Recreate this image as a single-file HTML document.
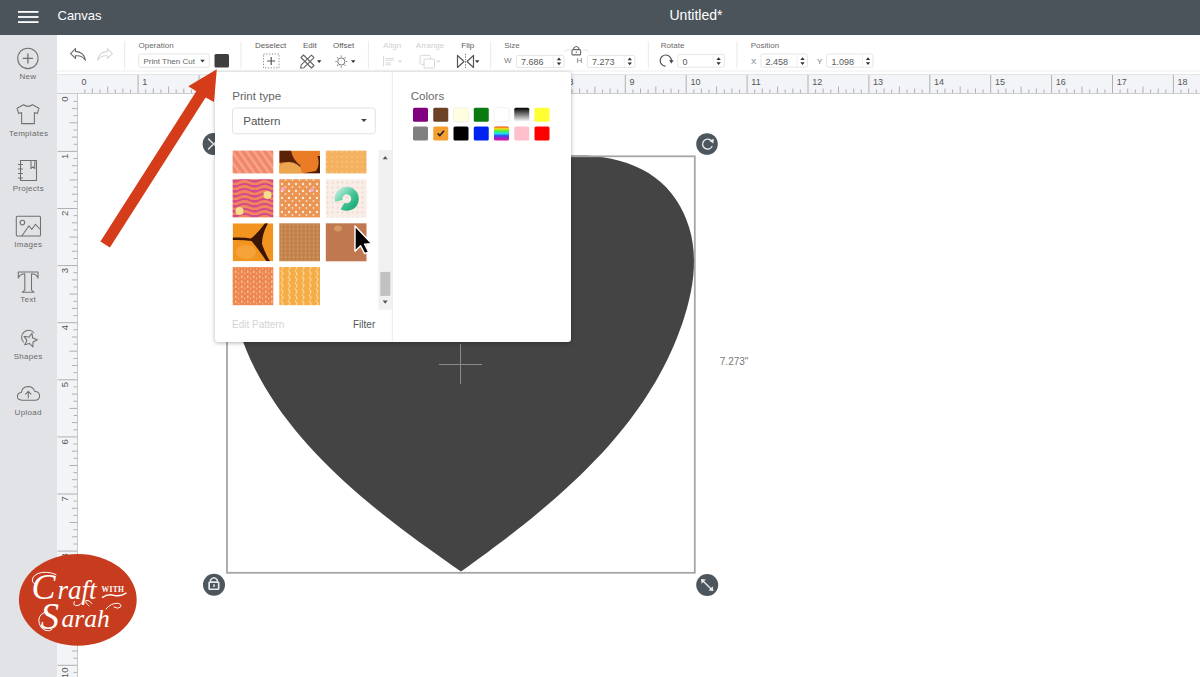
<!DOCTYPE html>
<html><head><meta charset="utf-8">
<style>
*{margin:0;padding:0;box-sizing:border-box}
html,body{width:1200px;height:677px;overflow:hidden;background:#fff;font-family:"Liberation Sans",sans-serif}
.abs{position:absolute;left:0;top:0}
svg{font-family:"Liberation Sans",sans-serif}
#popup{position:absolute;left:215px;top:72px;width:355.5px;height:270px;background:#fff;border-radius:3px;box-shadow:0 1px 4px rgba(0,0,0,0.30)}
</style></head><body>

<!-- base chrome -->
<svg class="abs" width="1200" height="677">
  <rect x="0" y="0" width="1200" height="35" fill="#4c545b"/>
  <rect x="0" y="35" width="57" height="642" fill="#e2e3e7"/>
  <g fill="#fff">
    <rect x="18" y="11" width="20.5" height="1.8"/>
    <rect x="18" y="16.1" width="20.5" height="1.8"/>
    <rect x="18" y="21.2" width="20.5" height="1.8"/>
  </g>
  <text x="57.5" y="20.2" font-size="13" fill="#fff">Canvas</text>
  <text x="669.5" y="20.3" font-size="14" fill="#fff">Untitled*</text>

  <!-- sidebar -->
  <g fill="none" stroke="#707070" stroke-width="1.05" stroke-linejoin="round" stroke-linecap="round">
    <!-- New -->
    <circle cx="27.9" cy="58.4" r="10.2"/>
    <path d="M27.9 53.8 V63 M23.3 58.4 H32.5" stroke-width="1.3"/>
    <!-- Templates: t-shirt -->
    <path d="M23.5 104.8 L17 108.2 L18.6 113.6 L21.6 112.6 L21.6 123.6 L34.4 123.6 L34.4 112.6 L37.4 113.6 L39 108.2 L32.5 104.8 Q28 108 23.5 104.8 Z"/>
    <!-- Projects: notebook -->
    <path d="M20.5 160.5 H36.5 V180.5 H20.5 Z M31 160.5 V168.5 L32.9 166.8 L34.8 168.5 V160.5"/>
    <path d="M18.4 164.5 H22.5 M18.4 169 H22.5 M18.4 173.5 H22.5 M18.4 178 H22.5"/>
    <!-- Images -->
    <rect x="16.3" y="216.3" width="24.2" height="19.6" rx="1"/>
    <circle cx="22.4" cy="222.6" r="2.3"/>
    <path d="M22 235.8 L29 225.8 L31.8 229.5 L35.4 224.3 L40.4 229.5"/>
    <!-- Text: T -->
    <path d="M18.3 272 H38 V278 L36.5 275.5 Q35 273.8 31.5 273.8 V290.2 L34 292.2 H22.3 L24.8 290.2 V273.8 Q21.3 273.8 19.8 275.5 L18.3 278 Z"/>
    <!-- Shapes -->
    <path d="M23.5 342 A6.8 6.8 0 1 1 33.8 332.5"/>
    <path d="M32.0 333.2 L32.7 338.1 L37.4 339.7 L33.0 342.0 L32.9 346.9 L29.4 343.4 L24.7 344.8 L26.9 340.4 L24.1 336.4 L29.0 337.1 Z"/>
    <!-- Upload: cloud -->
    <path d="M22 400.2 Q17.3 400 17.4 396.3 Q17.6 392.5 21.4 392.4 Q22 386.7 28 386.4 Q33.2 386.5 34.6 391.2 Q39.7 391.8 39.6 396 Q39.4 400.2 35 400.2 Z"/>
    <path d="M28.3 397.8 V391.5 M25.6 394.2 L28.3 391.3 L31 394.2"/>
  </g>
  <g fill="#6a6a6a" font-size="8" text-anchor="middle" letter-spacing="0.3">
    <text x="28" y="79.2">New</text>
    <text x="28.7" y="135.7">Templates</text>
    <text x="28.3" y="191.3">Projects</text>
    <text x="28.3" y="246.5">Images</text>
    <text x="28.2" y="302.4">Text</text>
    <text x="28.2" y="358.6">Shapes</text>
    <text x="28.2" y="414.5">Upload</text>
  </g>


  <!-- toolbar -->
  <line x1="57" y1="71" x2="1200" y2="71" stroke="#eeeff1" stroke-width="1"/>
  <!-- undo / redo -->
  <path d="M75.5 48.6 L70.6 53.6 L75.5 58.4 L75.5 55.8 Q82 55 85.5 60.2 Q84 52 75.5 51.4 Z" fill="none" stroke="#666" stroke-width="1.1" stroke-linejoin="round"/>
  <path d="M107.5 48.6 L112.4 53.6 L107.5 58.4 L107.5 55.8 Q101 55 97.5 60.2 Q99 52 107.5 51.4 Z" fill="none" stroke="#d6d6d6" stroke-width="1.1" stroke-linejoin="round"/>
  <!-- separators -->
  <g stroke="#e9e9ea" stroke-width="1">
    <line x1="124.7" y1="41.3" x2="124.7" y2="68.7"/>
    <line x1="241" y1="41.3" x2="241" y2="68.7"/>
    <line x1="368.4" y1="41.3" x2="368.4" y2="68.7"/>
    <line x1="490.7" y1="41.3" x2="490.7" y2="68.7"/>
    <line x1="648.3" y1="41.3" x2="648.3" y2="68.7"/>
    <line x1="736.9" y1="41.3" x2="736.9" y2="68.7"/>
  </g>
  <!-- labels -->
  <g font-size="8" fill="#6a6a6a">
    <text x="138.5" y="48">Operation</text>
    <text x="255" y="48" fill="#5a5a5a">Deselect</text>
    <text x="303" y="48" fill="#5a5a5a">Edit</text>
    <text x="333" y="48" fill="#5a5a5a">Offset</text>
    <text x="383.3" y="48" fill="#d0d0d0">Align</text>
    <text x="415.8" y="48" fill="#d0d0d0">Arrange</text>
    <text x="461.3" y="48" fill="#5a5a5a">Flip</text>
    <text x="504.2" y="48.2">Size</text>
    <text x="660.8" y="48.2">Rotate</text>
    <text x="750.7" y="48">Position</text>
  </g>
  <!-- operation dropdown -->
  <rect x="138.7" y="54" width="70.5" height="13.3" rx="1.5" fill="#fff" stroke="#e4e4e4" stroke-width="1"/>
  <text x="143.5" y="64" font-size="8" fill="#666">Print Then Cut</text>
  <path d="M200.3 59.8 H204.7 L202.5 62.6 Z" fill="#333"/>
  <rect x="214.5" y="54" width="14.5" height="13.5" rx="1.5" fill="#3e3e3e"/>
  <!-- deselect icon -->
  <rect x="263.5" y="54" width="15.5" height="13.8" fill="none" stroke="#888" stroke-width="1" stroke-dasharray="1.2 1.6"/>
  <path d="M271.2 57 V65 M267.2 61 H275.2" stroke="#555" stroke-width="1.2"/>
  <!-- edit icon: crossed pencil / ruler -->
  <g fill="none" stroke="#666" stroke-width="1.1" stroke-linejoin="round">
    <path d="M301 57.5 L303.5 55 L314 65.5 L311.5 68 Z"/>
    <path d="M311.5 55.2 L314 57.7 L304 67.7 L300.6 68.2 L301.2 64.9 Z"/>
  </g>
  <path d="M317 60.2 H321.4 L319.2 63 Z" fill="#333"/>
  <!-- offset icon: sun -->
  <g fill="none" stroke="#777" stroke-width="1">
    <circle cx="341.3" cy="61.5" r="3.6"/>
    <path d="M341.3 55.6 V56.8 M341.3 66.2 V67.4 M335.4 61.5 H336.6 M346 61.5 H347.2 M337.1 57.3 L338 58.2 M344.6 64.8 L345.5 65.7 M337.1 65.7 L338 64.8 M344.6 58.2 L345.5 57.3" stroke-width="1.1"/>
  </g>
  <path d="M351 60.2 H355.4 L353.2 63 Z" fill="#333"/>
  <!-- align icon (disabled) -->
  <g stroke="#dadada" stroke-width="1" fill="none">
    <path d="M383.5 56 V66.5"/>
    <path d="M385.5 58.5 H394 M385.5 60.3 H394 M385.5 63 H391 M385.5 64.8 H391"/>
  </g>
  <path d="M398 60.5 H402 L400 63 Z" fill="#d8d8d8"/>
  <!-- arrange icon (disabled) -->
  <g stroke="#d8d8d8" stroke-width="1" fill="#fff">
    <rect x="420" y="55.3" width="10.5" height="9" rx="1.5"/>
    <rect x="424" y="59" width="10.5" height="9" rx="1"/>
  </g>
  <path d="M436.3 60.5 H440.3 L438.3 63 Z" fill="#d8d8d8"/>
  <!-- flip icon -->
  <g fill="none" stroke="#555" stroke-width="1.2" stroke-linejoin="round">
    <path d="M457.5 55.5 V67.5 L464 61.5 Z"/>
    <path d="M473.5 55.5 V67.5 L467 61.5 Z"/>
  </g>
  <path d="M465.5 53.8 V68" stroke="#777" stroke-width="1" stroke-dasharray="1.3 1.3"/>
  <path d="M475 60.2 H479.4 L477.2 63 Z" fill="#333"/>

  <!-- size -->
  <g font-size="8" fill="#777">
    <text x="504" y="63">W</text>
    <text x="576.5" y="63">H</text>
    <text x="751" y="64">X</text>
    <text x="817" y="64">Y</text>
  </g>
  <!-- lock + bracket -->
  <path d="M565 52 Q565 50 567 50 H570.5 M582.5 50 H586 Q588 50 588 52" fill="none" stroke="#e4e4e4" stroke-width="1"/>
  <rect x="572" y="49.6" width="8.6" height="5.3" rx="1" fill="none" stroke="#666" stroke-width="1.1"/>
  <path d="M573.8 49.6 V48.2 Q576.3 44.8 578.8 48.2 V49.6" fill="none" stroke="#666" stroke-width="1.1"/>
  <circle cx="576.3" cy="52.2" r="0.7" fill="#666"/>

  <!-- inputs -->
  <g fill="#fff" stroke="#e6e6e6" stroke-width="1">
    <rect x="516.5" y="55.5" width="47.5" height="12" rx="1.5"/>
    <rect x="587.3" y="55.5" width="47.5" height="12" rx="1.5"/>
    <rect x="677.8" y="54.5" width="46.5" height="12.8" rx="1.5"/>
    <rect x="761" y="54" width="46.4" height="13.2" rx="1.5"/>
    <rect x="826.5" y="54" width="46.5" height="13.2" rx="1.5"/>
  </g>
  <g stroke="#efefef" stroke-width="1">
    <line x1="553.5" y1="56" x2="553.5" y2="67"/>
    <line x1="624.3" y1="56" x2="624.3" y2="67"/>
    <line x1="713.3" y1="55" x2="713.3" y2="67"/>
    <line x1="797" y1="54.5" x2="797" y2="67"/>
    <line x1="862.5" y1="54.5" x2="862.5" y2="67"/>
  </g>
  <g fill="#333">
    <path d="M556.8 60.3 L559 57.5 L561.2 60.3 Z M556.8 62.5 L559 65.3 L561.2 62.5 Z"/>
    <path d="M627.6 60.3 L629.8 57.5 L632 60.3 Z M627.6 62.5 L629.8 65.3 L632 62.5 Z"/>
    <path d="M716.4 60 L718.6 57.2 L720.8 60 Z M716.4 62.2 L718.6 65 L720.8 62.2 Z"/>
    <path d="M800.3 60 L802.5 57.2 L804.7 60 Z M800.3 62.2 L802.5 65 L804.7 62.2 Z"/>
    <path d="M865.8 60 L868 57.2 L870.2 60 Z M865.8 62.2 L868 65 L870.2 62.2 Z"/>
  </g>
  <g font-size="9" fill="#585858">
    <text x="521" y="64.8">7.686</text>
    <text x="592" y="64.8">7.273</text>
    <text x="682.5" y="64.8">0</text>
    <text x="765.4" y="64.6">2.458</text>
    <text x="831.6" y="64.6">1.098</text>
  </g>
  <!-- rotate icon -->
  <path d="M665.6 66.2 A5.6 5.6 0 1 1 671.4 60.8" fill="none" stroke="#555" stroke-width="1.2"/>
  <path d="M669.2 60 L673.6 60.2 L671.4 63.4 Z" fill="#444"/>


  <!-- rulers -->
  <rect x="57" y="74.5" width="1143" height="19.5" fill="#f3f4f7"/>
  <rect x="57" y="94" width="20.5" height="583" fill="#f3f4f7"/>
  <line x1="57" y1="74.5" x2="1200" y2="74.5" stroke="#e4e5e8" stroke-width="1"/>
  <g stroke="#b0b0b0" stroke-width="1">
<line x1="84.8" y1="89.5" x2="84.8" y2="93.5"/>
<line x1="92.4" y1="88.5" x2="92.4" y2="93.5"/>
<line x1="100.0" y1="89.5" x2="100.0" y2="93.5"/>
<line x1="107.7" y1="86.5" x2="107.7" y2="93.5"/>
<line x1="115.3" y1="89.5" x2="115.3" y2="93.5"/>
<line x1="122.9" y1="88.5" x2="122.9" y2="93.5"/>
<line x1="130.5" y1="89.5" x2="130.5" y2="93.5"/>
<line x1="138.1" y1="75.0" x2="138.1" y2="93.5"/>
<line x1="145.7" y1="89.5" x2="145.7" y2="93.5"/>
<line x1="153.3" y1="88.5" x2="153.3" y2="93.5"/>
<line x1="160.9" y1="89.5" x2="160.9" y2="93.5"/>
<line x1="168.6" y1="86.5" x2="168.6" y2="93.5"/>
<line x1="176.2" y1="89.5" x2="176.2" y2="93.5"/>
<line x1="183.8" y1="88.5" x2="183.8" y2="93.5"/>
<line x1="191.4" y1="89.5" x2="191.4" y2="93.5"/>
<line x1="199.0" y1="75.0" x2="199.0" y2="93.5"/>
<line x1="206.6" y1="89.5" x2="206.6" y2="93.5"/>
<line x1="214.2" y1="88.5" x2="214.2" y2="93.5"/>
<line x1="221.8" y1="89.5" x2="221.8" y2="93.5"/>
<line x1="229.4" y1="86.5" x2="229.4" y2="93.5"/>
<line x1="237.1" y1="89.5" x2="237.1" y2="93.5"/>
<line x1="244.7" y1="88.5" x2="244.7" y2="93.5"/>
<line x1="252.3" y1="89.5" x2="252.3" y2="93.5"/>
<line x1="259.9" y1="75.0" x2="259.9" y2="93.5"/>
<line x1="267.5" y1="89.5" x2="267.5" y2="93.5"/>
<line x1="275.1" y1="88.5" x2="275.1" y2="93.5"/>
<line x1="282.7" y1="89.5" x2="282.7" y2="93.5"/>
<line x1="290.4" y1="86.5" x2="290.4" y2="93.5"/>
<line x1="298.0" y1="89.5" x2="298.0" y2="93.5"/>
<line x1="305.6" y1="88.5" x2="305.6" y2="93.5"/>
<line x1="313.2" y1="89.5" x2="313.2" y2="93.5"/>
<line x1="320.8" y1="75.0" x2="320.8" y2="93.5"/>
<line x1="328.4" y1="89.5" x2="328.4" y2="93.5"/>
<line x1="336.0" y1="88.5" x2="336.0" y2="93.5"/>
<line x1="343.6" y1="89.5" x2="343.6" y2="93.5"/>
<line x1="351.2" y1="86.5" x2="351.2" y2="93.5"/>
<line x1="358.9" y1="89.5" x2="358.9" y2="93.5"/>
<line x1="366.5" y1="88.5" x2="366.5" y2="93.5"/>
<line x1="374.1" y1="89.5" x2="374.1" y2="93.5"/>
<line x1="381.7" y1="75.0" x2="381.7" y2="93.5"/>
<line x1="389.3" y1="89.5" x2="389.3" y2="93.5"/>
<line x1="396.9" y1="88.5" x2="396.9" y2="93.5"/>
<line x1="404.5" y1="89.5" x2="404.5" y2="93.5"/>
<line x1="412.1" y1="86.5" x2="412.1" y2="93.5"/>
<line x1="419.8" y1="89.5" x2="419.8" y2="93.5"/>
<line x1="427.4" y1="88.5" x2="427.4" y2="93.5"/>
<line x1="435.0" y1="89.5" x2="435.0" y2="93.5"/>
<line x1="442.6" y1="75.0" x2="442.6" y2="93.5"/>
<line x1="450.2" y1="89.5" x2="450.2" y2="93.5"/>
<line x1="457.8" y1="88.5" x2="457.8" y2="93.5"/>
<line x1="465.4" y1="89.5" x2="465.4" y2="93.5"/>
<line x1="473.0" y1="86.5" x2="473.0" y2="93.5"/>
<line x1="480.7" y1="89.5" x2="480.7" y2="93.5"/>
<line x1="488.3" y1="88.5" x2="488.3" y2="93.5"/>
<line x1="495.9" y1="89.5" x2="495.9" y2="93.5"/>
<line x1="503.5" y1="75.0" x2="503.5" y2="93.5"/>
<line x1="511.1" y1="89.5" x2="511.1" y2="93.5"/>
<line x1="518.7" y1="88.5" x2="518.7" y2="93.5"/>
<line x1="526.3" y1="89.5" x2="526.3" y2="93.5"/>
<line x1="534.0" y1="86.5" x2="534.0" y2="93.5"/>
<line x1="541.6" y1="89.5" x2="541.6" y2="93.5"/>
<line x1="549.2" y1="88.5" x2="549.2" y2="93.5"/>
<line x1="556.8" y1="89.5" x2="556.8" y2="93.5"/>
<line x1="564.4" y1="75.0" x2="564.4" y2="93.5"/>
<line x1="572.0" y1="89.5" x2="572.0" y2="93.5"/>
<line x1="579.6" y1="88.5" x2="579.6" y2="93.5"/>
<line x1="587.2" y1="89.5" x2="587.2" y2="93.5"/>
<line x1="594.9" y1="86.5" x2="594.9" y2="93.5"/>
<line x1="602.5" y1="89.5" x2="602.5" y2="93.5"/>
<line x1="610.1" y1="88.5" x2="610.1" y2="93.5"/>
<line x1="617.7" y1="89.5" x2="617.7" y2="93.5"/>
<line x1="625.3" y1="75.0" x2="625.3" y2="93.5"/>
<line x1="632.9" y1="89.5" x2="632.9" y2="93.5"/>
<line x1="640.5" y1="88.5" x2="640.5" y2="93.5"/>
<line x1="648.1" y1="89.5" x2="648.1" y2="93.5"/>
<line x1="655.8" y1="86.5" x2="655.8" y2="93.5"/>
<line x1="663.4" y1="89.5" x2="663.4" y2="93.5"/>
<line x1="671.0" y1="88.5" x2="671.0" y2="93.5"/>
<line x1="678.6" y1="89.5" x2="678.6" y2="93.5"/>
<line x1="686.2" y1="75.0" x2="686.2" y2="93.5"/>
<line x1="693.8" y1="89.5" x2="693.8" y2="93.5"/>
<line x1="701.4" y1="88.5" x2="701.4" y2="93.5"/>
<line x1="709.0" y1="89.5" x2="709.0" y2="93.5"/>
<line x1="716.6" y1="86.5" x2="716.6" y2="93.5"/>
<line x1="724.3" y1="89.5" x2="724.3" y2="93.5"/>
<line x1="731.9" y1="88.5" x2="731.9" y2="93.5"/>
<line x1="739.5" y1="89.5" x2="739.5" y2="93.5"/>
<line x1="747.1" y1="75.0" x2="747.1" y2="93.5"/>
<line x1="754.7" y1="89.5" x2="754.7" y2="93.5"/>
<line x1="762.3" y1="88.5" x2="762.3" y2="93.5"/>
<line x1="769.9" y1="89.5" x2="769.9" y2="93.5"/>
<line x1="777.6" y1="86.5" x2="777.6" y2="93.5"/>
<line x1="785.2" y1="89.5" x2="785.2" y2="93.5"/>
<line x1="792.8" y1="88.5" x2="792.8" y2="93.5"/>
<line x1="800.4" y1="89.5" x2="800.4" y2="93.5"/>
<line x1="808.0" y1="75.0" x2="808.0" y2="93.5"/>
<line x1="815.6" y1="89.5" x2="815.6" y2="93.5"/>
<line x1="823.2" y1="88.5" x2="823.2" y2="93.5"/>
<line x1="830.8" y1="89.5" x2="830.8" y2="93.5"/>
<line x1="838.5" y1="86.5" x2="838.5" y2="93.5"/>
<line x1="846.1" y1="89.5" x2="846.1" y2="93.5"/>
<line x1="853.7" y1="88.5" x2="853.7" y2="93.5"/>
<line x1="861.3" y1="89.5" x2="861.3" y2="93.5"/>
<line x1="868.9" y1="75.0" x2="868.9" y2="93.5"/>
<line x1="876.5" y1="89.5" x2="876.5" y2="93.5"/>
<line x1="884.1" y1="88.5" x2="884.1" y2="93.5"/>
<line x1="891.7" y1="89.5" x2="891.7" y2="93.5"/>
<line x1="899.4" y1="86.5" x2="899.4" y2="93.5"/>
<line x1="907.0" y1="89.5" x2="907.0" y2="93.5"/>
<line x1="914.6" y1="88.5" x2="914.6" y2="93.5"/>
<line x1="922.2" y1="89.5" x2="922.2" y2="93.5"/>
<line x1="929.8" y1="75.0" x2="929.8" y2="93.5"/>
<line x1="937.4" y1="89.5" x2="937.4" y2="93.5"/>
<line x1="945.0" y1="88.5" x2="945.0" y2="93.5"/>
<line x1="952.6" y1="89.5" x2="952.6" y2="93.5"/>
<line x1="960.2" y1="86.5" x2="960.2" y2="93.5"/>
<line x1="967.9" y1="89.5" x2="967.9" y2="93.5"/>
<line x1="975.5" y1="88.5" x2="975.5" y2="93.5"/>
<line x1="983.1" y1="89.5" x2="983.1" y2="93.5"/>
<line x1="990.7" y1="75.0" x2="990.7" y2="93.5"/>
<line x1="998.3" y1="89.5" x2="998.3" y2="93.5"/>
<line x1="1005.9" y1="88.5" x2="1005.9" y2="93.5"/>
<line x1="1013.5" y1="89.5" x2="1013.5" y2="93.5"/>
<line x1="1021.1" y1="86.5" x2="1021.1" y2="93.5"/>
<line x1="1028.8" y1="89.5" x2="1028.8" y2="93.5"/>
<line x1="1036.4" y1="88.5" x2="1036.4" y2="93.5"/>
<line x1="1044.0" y1="89.5" x2="1044.0" y2="93.5"/>
<line x1="1051.6" y1="75.0" x2="1051.6" y2="93.5"/>
<line x1="1059.2" y1="89.5" x2="1059.2" y2="93.5"/>
<line x1="1066.8" y1="88.5" x2="1066.8" y2="93.5"/>
<line x1="1074.4" y1="89.5" x2="1074.4" y2="93.5"/>
<line x1="1082.0" y1="86.5" x2="1082.0" y2="93.5"/>
<line x1="1089.7" y1="89.5" x2="1089.7" y2="93.5"/>
<line x1="1097.3" y1="88.5" x2="1097.3" y2="93.5"/>
<line x1="1104.9" y1="89.5" x2="1104.9" y2="93.5"/>
<line x1="1112.5" y1="75.0" x2="1112.5" y2="93.5"/>
<line x1="1120.1" y1="89.5" x2="1120.1" y2="93.5"/>
<line x1="1127.7" y1="88.5" x2="1127.7" y2="93.5"/>
<line x1="1135.3" y1="89.5" x2="1135.3" y2="93.5"/>
<line x1="1143.0" y1="86.5" x2="1143.0" y2="93.5"/>
<line x1="1150.6" y1="89.5" x2="1150.6" y2="93.5"/>
<line x1="1158.2" y1="88.5" x2="1158.2" y2="93.5"/>
<line x1="1165.8" y1="89.5" x2="1165.8" y2="93.5"/>
<line x1="1173.4" y1="75.0" x2="1173.4" y2="93.5"/>
<line x1="1181.0" y1="89.5" x2="1181.0" y2="93.5"/>
<line x1="1188.6" y1="88.5" x2="1188.6" y2="93.5"/>
<line x1="1196.2" y1="89.5" x2="1196.2" y2="93.5"/>
<line x1="73.5" y1="101.4" x2="77.5" y2="101.4"/>
<line x1="72.0" y1="108.6" x2="77.5" y2="108.6"/>
<line x1="73.5" y1="115.7" x2="77.5" y2="115.7"/>
<line x1="69.5" y1="122.8" x2="77.5" y2="122.8"/>
<line x1="73.5" y1="130.0" x2="77.5" y2="130.0"/>
<line x1="72.0" y1="137.1" x2="77.5" y2="137.1"/>
<line x1="73.5" y1="144.3" x2="77.5" y2="144.3"/>
<line x1="57.5" y1="151.4" x2="77.5" y2="151.4"/>
<line x1="73.5" y1="158.5" x2="77.5" y2="158.5"/>
<line x1="72.0" y1="165.7" x2="77.5" y2="165.7"/>
<line x1="73.5" y1="172.8" x2="77.5" y2="172.8"/>
<line x1="69.5" y1="179.9" x2="77.5" y2="179.9"/>
<line x1="73.5" y1="187.1" x2="77.5" y2="187.1"/>
<line x1="72.0" y1="194.2" x2="77.5" y2="194.2"/>
<line x1="73.5" y1="201.4" x2="77.5" y2="201.4"/>
<line x1="57.5" y1="208.5" x2="77.5" y2="208.5"/>
<line x1="73.5" y1="215.6" x2="77.5" y2="215.6"/>
<line x1="72.0" y1="222.8" x2="77.5" y2="222.8"/>
<line x1="73.5" y1="229.9" x2="77.5" y2="229.9"/>
<line x1="69.5" y1="237.1" x2="77.5" y2="237.1"/>
<line x1="73.5" y1="244.2" x2="77.5" y2="244.2"/>
<line x1="72.0" y1="251.3" x2="77.5" y2="251.3"/>
<line x1="73.5" y1="258.5" x2="77.5" y2="258.5"/>
<line x1="57.5" y1="265.6" x2="77.5" y2="265.6"/>
<line x1="73.5" y1="272.7" x2="77.5" y2="272.7"/>
<line x1="72.0" y1="279.9" x2="77.5" y2="279.9"/>
<line x1="73.5" y1="287.0" x2="77.5" y2="287.0"/>
<line x1="69.5" y1="294.1" x2="77.5" y2="294.1"/>
<line x1="73.5" y1="301.3" x2="77.5" y2="301.3"/>
<line x1="72.0" y1="308.4" x2="77.5" y2="308.4"/>
<line x1="73.5" y1="315.6" x2="77.5" y2="315.6"/>
<line x1="57.5" y1="322.7" x2="77.5" y2="322.7"/>
<line x1="73.5" y1="329.8" x2="77.5" y2="329.8"/>
<line x1="72.0" y1="337.0" x2="77.5" y2="337.0"/>
<line x1="73.5" y1="344.1" x2="77.5" y2="344.1"/>
<line x1="69.5" y1="351.2" x2="77.5" y2="351.2"/>
<line x1="73.5" y1="358.4" x2="77.5" y2="358.4"/>
<line x1="72.0" y1="365.5" x2="77.5" y2="365.5"/>
<line x1="73.5" y1="372.7" x2="77.5" y2="372.7"/>
<line x1="57.5" y1="379.8" x2="77.5" y2="379.8"/>
<line x1="73.5" y1="386.9" x2="77.5" y2="386.9"/>
<line x1="72.0" y1="394.1" x2="77.5" y2="394.1"/>
<line x1="73.5" y1="401.2" x2="77.5" y2="401.2"/>
<line x1="69.5" y1="408.4" x2="77.5" y2="408.4"/>
<line x1="73.5" y1="415.5" x2="77.5" y2="415.5"/>
<line x1="72.0" y1="422.6" x2="77.5" y2="422.6"/>
<line x1="73.5" y1="429.8" x2="77.5" y2="429.8"/>
<line x1="57.5" y1="436.9" x2="77.5" y2="436.9"/>
<line x1="73.5" y1="444.0" x2="77.5" y2="444.0"/>
<line x1="72.0" y1="451.2" x2="77.5" y2="451.2"/>
<line x1="73.5" y1="458.3" x2="77.5" y2="458.3"/>
<line x1="69.5" y1="465.5" x2="77.5" y2="465.5"/>
<line x1="73.5" y1="472.6" x2="77.5" y2="472.6"/>
<line x1="72.0" y1="479.7" x2="77.5" y2="479.7"/>
<line x1="73.5" y1="486.9" x2="77.5" y2="486.9"/>
<line x1="57.5" y1="494.0" x2="77.5" y2="494.0"/>
<line x1="73.5" y1="501.1" x2="77.5" y2="501.1"/>
<line x1="72.0" y1="508.3" x2="77.5" y2="508.3"/>
<line x1="73.5" y1="515.4" x2="77.5" y2="515.4"/>
<line x1="69.5" y1="522.5" x2="77.5" y2="522.5"/>
<line x1="73.5" y1="529.7" x2="77.5" y2="529.7"/>
<line x1="72.0" y1="536.8" x2="77.5" y2="536.8"/>
<line x1="73.5" y1="544.0" x2="77.5" y2="544.0"/>
<line x1="57.5" y1="551.1" x2="77.5" y2="551.1"/>
<line x1="73.5" y1="558.2" x2="77.5" y2="558.2"/>
<line x1="72.0" y1="565.4" x2="77.5" y2="565.4"/>
<line x1="73.5" y1="572.5" x2="77.5" y2="572.5"/>
<line x1="69.5" y1="579.6" x2="77.5" y2="579.6"/>
<line x1="73.5" y1="586.8" x2="77.5" y2="586.8"/>
<line x1="72.0" y1="593.9" x2="77.5" y2="593.9"/>
<line x1="73.5" y1="601.1" x2="77.5" y2="601.1"/>
<line x1="57.5" y1="608.2" x2="77.5" y2="608.2"/>
<line x1="73.5" y1="615.3" x2="77.5" y2="615.3"/>
<line x1="72.0" y1="622.5" x2="77.5" y2="622.5"/>
<line x1="73.5" y1="629.6" x2="77.5" y2="629.6"/>
<line x1="69.5" y1="636.8" x2="77.5" y2="636.8"/>
<line x1="73.5" y1="643.9" x2="77.5" y2="643.9"/>
<line x1="72.0" y1="651.0" x2="77.5" y2="651.0"/>
<line x1="73.5" y1="658.2" x2="77.5" y2="658.2"/>
<line x1="57.5" y1="665.3" x2="77.5" y2="665.3"/>
<line x1="73.5" y1="672.4" x2="77.5" y2="672.4"/>
  </g>
  <g fill="#555" font-size="9">
<text x="81.4" y="85.2">0</text>
<text x="142.3" y="85.2">1</text>
<text x="203.2" y="85.2">2</text>
<text x="264.1" y="85.2">3</text>
<text x="325.0" y="85.2">4</text>
<text x="385.9" y="85.2">5</text>
<text x="446.8" y="85.2">6</text>
<text x="507.7" y="85.2">7</text>
<text x="568.6" y="85.2">8</text>
<text x="629.5" y="85.2">9</text>
<text x="690.4" y="85.2">10</text>
<text x="751.3" y="85.2">11</text>
<text x="812.2" y="85.2">12</text>
<text x="873.1" y="85.2">13</text>
<text x="934.0" y="85.2">14</text>
<text x="994.9" y="85.2">15</text>
<text x="1055.8" y="85.2">16</text>
<text x="1116.7" y="85.2">17</text>
<text x="1177.6" y="85.2">18</text>
<text text-anchor="end" font-size="9.6" transform="translate(68.2 96.5) rotate(-90)">0</text>
<text text-anchor="end" font-size="9.6" transform="translate(68.2 153.6) rotate(-90)">1</text>
<text text-anchor="end" font-size="9.6" transform="translate(68.2 210.7) rotate(-90)">2</text>
<text text-anchor="end" font-size="9.6" transform="translate(68.2 267.8) rotate(-90)">3</text>
<text text-anchor="end" font-size="9.6" transform="translate(68.2 324.9) rotate(-90)">4</text>
<text text-anchor="end" font-size="9.6" transform="translate(68.2 382.0) rotate(-90)">5</text>
<text text-anchor="end" font-size="9.6" transform="translate(68.2 439.1) rotate(-90)">6</text>
<text text-anchor="end" font-size="9.6" transform="translate(68.2 496.2) rotate(-90)">7</text>
<text text-anchor="end" font-size="9.6" transform="translate(68.2 553.3) rotate(-90)">8</text>
<text text-anchor="end" font-size="9.6" transform="translate(68.2 610.4) rotate(-90)">9</text>
<text text-anchor="end" font-size="9.6" transform="translate(68.2 667.5) rotate(-90)">10</text>
  </g>
  <line x1="57" y1="93.5" x2="1200" y2="93.5" stroke="#cdcdcd" stroke-width="1"/>
  <line x1="77.5" y1="94" x2="77.5" y2="677" stroke="#c8c8c8" stroke-width="1"/>

  <!-- heart + box -->
  <path d="M461.0 214.0 L465.2 207.4 L469.9 201.1 L475.1 195.3 L480.7 189.8 L486.7 184.7 L493.1 180.1 L499.8 175.8 L506.8 172.0 L514.1 168.5 L521.6 165.4 L529.3 162.8 L537.2 160.5 L545.3 158.7 L553.5 157.2 L561.7 156.2 L570.1 155.6 L578.4 155.4 L586.7 155.6 L595.0 156.2 L603.2 157.3 L611.3 158.8 L619.3 160.7 L627.0 163.1 L634.5 165.9 L641.6 169.3 L648.5 173.1 L654.9 177.4 L660.9 182.2 L666.4 187.6 L671.5 193.4 L676.1 199.7 L680.1 206.3 L683.7 213.2 L686.7 220.5 L689.3 228.0 L691.3 235.7 L692.7 243.5 L693.6 251.4 L694.0 259.4 L693.9 267.5 L693.3 275.6 L692.3 283.7 L690.9 291.7 L689.1 299.8 L687.1 307.8 L684.8 315.6 L682.3 323.4 L679.5 331.1 L676.6 338.7 L673.5 346.2 L670.2 353.5 L666.8 360.8 L663.1 367.9 L659.3 375.0 L655.4 381.9 L651.2 388.8 L647.0 395.5 L642.6 402.2 L638.0 408.8 L633.3 415.3 L628.5 421.7 L623.5 428.0 L618.4 434.2 L613.3 440.3 L608.0 446.4 L602.6 452.4 L597.0 458.3 L591.4 464.1 L585.8 469.8 L580.0 475.5 L574.1 481.1 L568.2 486.6 L562.2 492.1 L556.1 497.5 L550.0 502.8 L543.8 508.1 L537.6 513.3 L531.4 518.4 L525.1 523.5 L518.7 528.5 L512.3 533.5 L506.0 538.4 L499.5 543.3 L493.1 548.1 L486.7 552.9 L480.3 557.6 L473.8 562.3 L467.4 566.9 L461.0 571.5 L452.6 565.7 L444.2 559.8 L435.8 553.8 L427.4 547.8 L418.9 541.7 L410.5 535.5 L402.1 529.2 L393.7 522.8 L385.4 516.3 L377.2 509.7 L369.0 503.0 L360.9 496.2 L352.9 489.2 L345.1 482.2 L337.3 475.0 L329.8 467.8 L322.3 460.3 L315.1 452.8 L308.0 445.1 L301.2 437.3 L294.5 429.3 L288.1 421.1 L281.9 412.9 L276.0 404.4 L270.3 395.8 L264.9 387.1 L259.8 378.1 L255.0 369.0 L250.5 359.7 L246.4 350.3 L242.6 340.6 L239.2 330.8 L236.2 320.8 L233.5 310.6 L231.2 300.2 L229.5 289.6 L228.2 279.0 L227.4 268.2 L227.2 257.4 L227.6 246.6 L228.7 236.0 L230.9 225.8 L234.2 216.1 L238.5 207.1 L243.9 198.7 L250.2 191.0 L257.3 184.1 L265.2 177.8 L273.7 172.3 L282.8 167.5 L292.4 163.6 L302.3 160.4 L312.6 158.1 L323.2 156.5 L333.9 155.7 L344.6 155.5 L355.5 156.0 L366.2 157.1 L376.9 158.8 L387.3 160.9 L397.5 163.6 L407.4 166.7 L416.8 170.3 L425.8 174.6 L434.2 179.8 L442.0 185.9 L449.1 193.2 L455.5 201.9 L461.0 212.0 Z" fill="#444444"/>
  <rect x="227" y="156.3" width="467.8" height="416.5" fill="none" stroke="#a6a6a6" stroke-width="1.8"/>
  <line x1="460.5" y1="344" x2="460.5" y2="384" stroke="#8a8a8a" stroke-width="1"/>
  <line x1="439" y1="364.5" x2="482" y2="364.5" stroke="#8a8a8a" stroke-width="1"/>
  <text x="719.8" y="365.1" font-size="10" fill="#777">7.273"</text>
  <g fill="#4d565c">
    <circle cx="213.6" cy="144" r="11"/>
    <circle cx="707" cy="144" r="10.8"/>
    <circle cx="214" cy="584.8" r="11"/>
    <circle cx="707.2" cy="585" r="11"/>
  </g>
  <g stroke="#e8eaeb" stroke-width="1.4" fill="none" stroke-linecap="round">
    <path d="M208.5 139 L218.7 149.1 M218.7 139 L208.5 149.1"/>
    <path d="M711.5 141 A5 5 0 1 0 712 146.5"/>
    <path d="M702 580 L712.4 590.2"/>
  </g>
  <g fill="#e8eaeb">
    <path d="M709.3 140.8 L713.8 138.8 L713.4 143.6 Z"/>
    <path d="M701 579 L705.8 579.6 L701.6 583.8 Z"/>
    <path d="M713.4 591 L708.6 590.4 L712.8 586.2 Z"/>
    <rect x="208.3" y="581.3" width="11.2" height="8.8" rx="1.5"/>
  </g>
  <path d="M210.5 582 V580 Q214 575.3 217.3 580 V582" fill="none" stroke="#e8eaeb" stroke-width="1.5"/>
  <rect x="210" y="583" width="7.8" height="5.5" fill="#4d565c"/>
  <rect x="213.2" y="584.3" width="1.6" height="2.6" fill="#e8eaeb"/>

</svg>

<div id="popup"></div>
<svg class="abs" width="1200" height="677">
  <line x1="392.3" y1="72" x2="392.3" y2="342" stroke="#ececec" stroke-width="1"/>
  <text x="232.2" y="100" font-size="11.6" fill="#666">Print type</text>
  <rect x="232.5" y="108" width="142.8" height="25.8" rx="3" fill="#fff" stroke="#e2e2e2" stroke-width="1"/>
  <text x="243.2" y="125.4" font-size="11.6" fill="#555">Pattern</text>
  <path d="M361 119 H366.8 L363.9 122 Z" fill="#444"/>
  <text x="410.7" y="100" font-size="11.6" fill="#6a6a6a">Colors</text>
  <!-- scrollbar -->
  <rect x="378.3" y="150" width="13.7" height="159.6" fill="#f1f1f1"/>
  <path d="M382.7 159.3 L385.2 156 L387.7 159.3 Z" fill="#555"/>
  <path d="M382.7 300.5 L385.2 303.8 L387.7 300.5 Z" fill="#555"/>
  <rect x="380.3" y="271.9" width="10" height="24" fill="#c1c1c1"/>
  <text x="232" y="328.2" font-size="10" fill="#d4d4d4">Edit Pattern</text>
  <text x="353" y="328.2" font-size="10" fill="#555">Filter</text>
  <defs>
    <pattern id="p1" width="6" height="6" patternUnits="userSpaceOnUse" patternTransform="rotate(-35)">
      <rect width="6" height="6" fill="#f08769"/><rect width="2.4" height="6" fill="#f6a58b"/>
    </pattern>
    <pattern id="p3" width="5" height="5" patternUnits="userSpaceOnUse">
      <rect width="5" height="5" fill="#f4b160"/><rect x="1" y="1" width="2" height="1.5" fill="#f7c27c"/>
    </pattern>
    <pattern id="p4" width="20" height="5" patternUnits="userSpaceOnUse">
      <rect width="20" height="5" fill="#d64a8a"/>
      <path d="M0 1 Q5 -1 10 1.5 Q15 4 20 1 V3.8 Q15 6.8 10 4.3 Q5 1.8 0 3.8 Z" fill="#f0865e"/>
    </pattern>
    <pattern id="p5" width="7" height="7" patternUnits="userSpaceOnUse">
      <rect width="7" height="7" fill="#ea9553"/>
      <circle cx="2" cy="2" r="1.2" fill="#fbe9d4"/><circle cx="5.5" cy="5" r="0.9" fill="#f9dcc0"/>
    </pattern>
    <pattern id="p6" width="5" height="5" patternUnits="userSpaceOnUse">
      <rect width="5" height="5" fill="#f8ede7"/><circle cx="2.5" cy="2.5" r="0.9" fill="#f2d4cc"/>
    </pattern>
    <pattern id="p8" width="4" height="4" patternUnits="userSpaceOnUse">
      <rect width="4" height="4" fill="#c4844d"/><rect x="1" y="0.5" width="1.2" height="1.2" fill="#d9a56a"/><rect x="3" y="2.5" width="0.8" height="0.8" fill="#b07040"/>
    </pattern>
    <pattern id="p10" width="6" height="5" patternUnits="userSpaceOnUse">
      <rect width="6" height="5" fill="#ee8650"/><rect x="1" y="0.5" width="1.5" height="2.5" fill="#f7bd8e"/><rect x="4" y="2.5" width="1.2" height="2" fill="#f5b080"/>
    </pattern>
    <pattern id="p11" width="7" height="6" patternUnits="userSpaceOnUse">
      <rect width="7" height="6" fill="#f6ad47"/><path d="M1 0.5 L3 3.5 L2 5.5" stroke="#fbd8a0" stroke-width="1.2" fill="none"/>
    </pattern>
    <linearGradient id="tealg" gradientUnits="userSpaceOnUse" x1="336" y1="188" x2="356" y2="208">
      <stop offset="0" stop-color="#d4f2e6"/><stop offset="0.55" stop-color="#45c79a"/><stop offset="1" stop-color="#1aa875"/>
    </linearGradient>
    <radialGradient id="or" cx="0.45" cy="0.4" r="0.6">
      <stop offset="0" stop-color="#f59a2e"/><stop offset="0.8" stop-color="#e57d12"/><stop offset="1" stop-color="#b85a08"/>
    </radialGradient>
    <radialGradient id="ring" cx="0.5" cy="0.5" r="0.5">
      <stop offset="0.55" stop-color="#f8ede7" stop-opacity="0"/><stop offset="0.56" stop-color="#2db88c"/><stop offset="0.98" stop-color="#38c596"/><stop offset="1" stop-color="#38c596" stop-opacity="0"/>
    </radialGradient>
    <clipPath id="c2"><rect x="279.3" y="150.6" width="40.7" height="22.8"/></clipPath>
    <clipPath id="c7"><rect x="232.6" y="223.3" width="40.7" height="38"/></clipPath>
  </defs>
  <rect x="232.6" y="150.6" width="40.7" height="22.8" fill="url(#p1)"/>
  <g clip-path="url(#c2)"><rect x="279.3" y="150.6" width="40.7" height="22.8" fill="#ea7c26"/>
    <path d="M279.3 150.6 H291 Q292.5 160 301 166 L296 168 Q288 160 279.3 163 Z" fill="#5c2208"/><path d="M317.5 156 Q320.5 165 316 171 L302 173.4 H320 V156 Z" fill="#4a1c06"/><ellipse cx="289" cy="172" rx="12.5" ry="10" fill="#eda650"/></g>
  <rect x="325.8" y="150.6" width="40.7" height="22.8" fill="url(#p3)"/>
  <rect x="232.6" y="179.2" width="40.7" height="38.2" fill="url(#p4)"/>
  <circle cx="267.5" cy="195" r="4" fill="#f3e08a"/><circle cx="239.5" cy="211" r="4" fill="#f3e08a"/>
  <rect x="279.3" y="179.2" width="40.7" height="38.2" fill="url(#p5)"/>
  <circle cx="283" cy="189" r="2" fill="#f4a9c4"/><circle cx="312" cy="190" r="2" fill="#f4a9c4"/>
  <rect x="325.8" y="179.2" width="40.7" height="38.2" fill="url(#p6)"/>
  <path d="M338.7 200.85 A8.3 8.3 0 1 1 342.55 205.9" fill="none" stroke="url(#tealg)" stroke-width="7.5"/>
  <g clip-path="url(#c7)"><rect x="232.6" y="223.3" width="40.7" height="38.0" fill="#f29420"/>
    <path d="M232.6 237.5 Q245 237 251 238.5 Q258 233 265 223.3 L268 223.3 Q262 234 262 244 Q265 253 270 261.3 H266.5 Q259 250 251.5 241 Q244 239.8 232.6 240 Z" fill="#3a1404"/><ellipse cx="246" cy="252" rx="10" ry="7" fill="#f6ae4a" opacity="0.6"/></g>
  <rect x="279.3" y="223.3" width="40.7" height="38.0" fill="url(#p8)"/>
  <rect x="325.8" y="223.3" width="40.7" height="38.0" fill="#bf7850"/>
  <ellipse cx="338" cy="228.5" rx="4" ry="3" fill="#d39a62"/>
  <rect x="232.6" y="267.0" width="40.7" height="38.2" fill="url(#p10)"/>
  <rect x="279.3" y="267.0" width="40.7" height="38.2" fill="url(#p11)"/>
  <path d="M355 226 L355 251.2 L360.6 245.8 L364.6 253.6 L368.6 251.8 L364.6 244.2 L371.6 243.6 Z" fill="#000" stroke="#fff" stroke-width="1.4" stroke-linejoin="round"/>
  <defs>
    <linearGradient id="gbw" x1="0" y1="0" x2="0" y2="1"><stop offset="0" stop-color="#000"/><stop offset="1" stop-color="#fff"/></linearGradient>
    <linearGradient id="rainbow" x1="0" y1="0" x2="0" y2="1">
      <stop offset="0" stop-color="#f04a10"/><stop offset="0.16" stop-color="#f0e020"/><stop offset="0.33" stop-color="#40f040"/><stop offset="0.5" stop-color="#20e0f0"/><stop offset="0.66" stop-color="#3050f0"/><stop offset="0.83" stop-color="#a020d0"/><stop offset="1" stop-color="#e01090"/>
    </linearGradient>
  </defs>
  <rect x="413.00" y="107.75" width="15" height="14" rx="1.5" fill="#800080"/>
  <rect x="433.25" y="107.75" width="15" height="14" rx="1.5" fill="#6b4224"/>
  <rect x="453.50" y="107.75" width="15" height="14" rx="1.5" fill="#ffffe0" stroke="#eeeeee" stroke-width="0.8"/>
  <rect x="473.75" y="107.75" width="15" height="14" rx="1.5" fill="#0a7a12"/>
  <rect x="494.00" y="107.75" width="15" height="14" rx="1.5" fill="#ffffff" stroke="#eeeeee" stroke-width="0.8"/>
  <rect x="514.25" y="107.75" width="15" height="14" rx="1.5" fill="url(#gbw)"/>
  <rect x="534.50" y="107.75" width="15" height="14" rx="1.5" fill="#ffff33"/>
  <rect x="413.00" y="126.50" width="15" height="14" rx="1.5" fill="#808080"/>
  <rect x="433.25" y="126.50" width="15" height="14" rx="1.5" fill="#f4a030"/>
  <rect x="453.50" y="126.50" width="15" height="14" rx="1.5" fill="#000000"/>
  <rect x="473.75" y="126.50" width="15" height="14" rx="1.5" fill="#0022f0"/>
  <rect x="494.00" y="126.50" width="15" height="14" rx="1.5" fill="url(#rainbow)"/>
  <rect x="514.25" y="126.50" width="15" height="14" rx="1.5" fill="#ffc0cb"/>
  <rect x="534.50" y="126.50" width="15" height="14" rx="1.5" fill="#ff0000"/>
  <path d="M437.6 133.4 L439.8 135.6 L444 130.8" fill="none" stroke="#222" stroke-width="1.6"/>

  <path d="M216.8 69.3 L214 101.9 L205.6 97.4 L109.9 247.6 L100.4 241.5 L196.3 91.2 L188.3 86.3 Z" fill="#d53c19"/>

  <ellipse cx="77.8" cy="599.8" rx="58.9" ry="45.9" fill="#c73c1e"/>
  <g fill="#fff" font-family="Liberation Serif" font-style="italic">
    <text x="31.5" y="599" font-size="36">C</text>
    <text x="57.5" y="598.5" font-size="27">raft</text>
    <text x="40.5" y="629" font-size="37">S</text>
    <text x="61.5" y="626.5" font-size="25.5">arah</text>
  </g>
  <text x="101.6" y="591.6" font-size="7.6" fill="#fff" font-family="Liberation Serif" font-weight="bold" letter-spacing="0.25">WITH</text>
  <g fill="none" stroke="#fff" stroke-width="1" stroke-linecap="round">
    <path d="M56 574.5 Q46 570.5 38 573.5 Q31.5 576.5 32.5 581.5 Q34 585 37.5 583"/>
    <path d="M83.5 600 Q80.5 606.5 75.5 605.5 Q72.5 604.5 74.5 601.5"/>
    <path d="M102.5 597.3 Q108 593.5 114 595.3 Q120 597 126 593.2" stroke-width="1.4"/>
    <path d="M106 609 Q111 603 117.5 603.3 Q122 604 120.5 607 Q118 609.5 114 607"/>
    <path d="M89 606 Q84.5 602 86 600.5 Q89 599.5 92 603.5"/>
    <path d="M47 612 Q39.5 613 38.8 620 Q39 628 46 630.5 Q50 631.5 52 629.5"/>
  </g>

</svg>
</body></html>
